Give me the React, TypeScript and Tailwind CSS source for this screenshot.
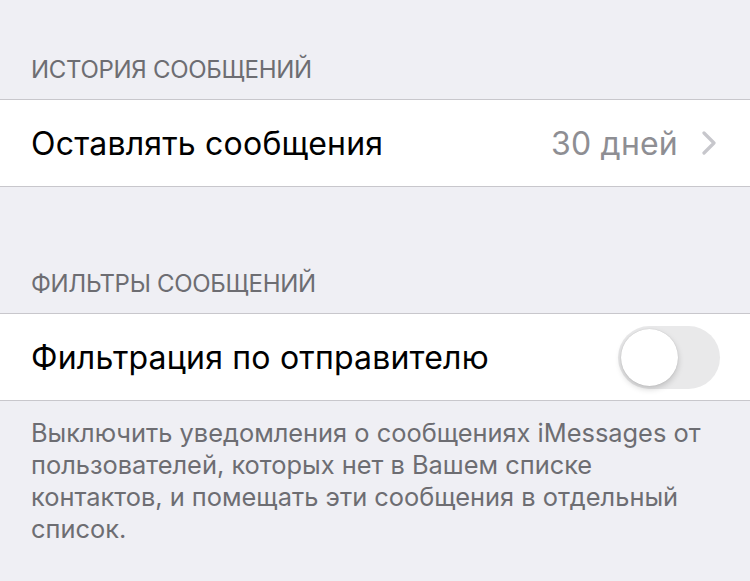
import React from "react";

const font = { fontFamily: "Inter, 'Noto Sans', sans-serif" };

export default function App() {
  return (
    <div
      className="w-[750px] h-[581px] bg-[#efeff4] overflow-hidden"
      style={font}
    >
      <div className="h-[99px] flex items-end px-[31px] pb-[13px] text-[24px] tracking-[-0.3px] leading-[32px] text-[#6d6d72]">
        ИСТОРИЯ СООБЩЕНИЙ
      </div>
      <div className="h-[88px] bg-white border-y border-[#c8c7cc] flex items-center pl-[31px] pr-[34px]">
        <span className="text-[32px] tracking-[0.2px] text-black flex-1 pt-[2px]">Оставлять сообщения</span>
        <span className="text-[32px] tracking-[0.2px] text-[#8e8e93] pt-[2px]">30 дней</span>
        <svg
          width="14"
          height="24"
          viewBox="0 0 14 24"
          className="ml-[24px]"
          fill="none"
        >
          <path
            d="M2 2 L12 12 L2 22"
            stroke="#c7c7cc"
            strokeWidth="3.2"
            strokeLinecap="round"
            strokeLinejoin="round"
          />
        </svg>
      </div>
      <div className="h-[126px] flex items-end px-[31px] pb-[13px] text-[24px] tracking-[-0.3px] leading-[32px] text-[#6d6d72]">
        ФИЛЬТРЫ СООБЩЕНИЙ
      </div>
      <div className="h-[88px] bg-white border-y border-[#c8c7cc] flex items-center pl-[31px] pr-[30px]">
        <span className="text-[32px] tracking-[0.2px] text-black flex-1 pt-[2px]">Фильтрация по отправителю</span>
        <div className="relative w-[102px] h-[63px] rounded-full bg-[#e9e9ea]">
          <div className="absolute left-[3px] top-[3px] w-[57px] h-[57px] rounded-full bg-white shadow-[0_3px_6px_rgba(0,0,0,0.18),0_0_1px_rgba(0,0,0,0.2)]" />
        </div>
      </div>
      <div className="pt-[16px] pl-[31px] pr-[30px] text-[25.4px] leading-[32px] text-[#6d6d72]">
        Выключить уведомления о сообщениях iMessages от пользователей, которых нет в Вашем списке контактов, и помещать эти сообщения в отдельный список.
      </div>
    </div>
  );
}
